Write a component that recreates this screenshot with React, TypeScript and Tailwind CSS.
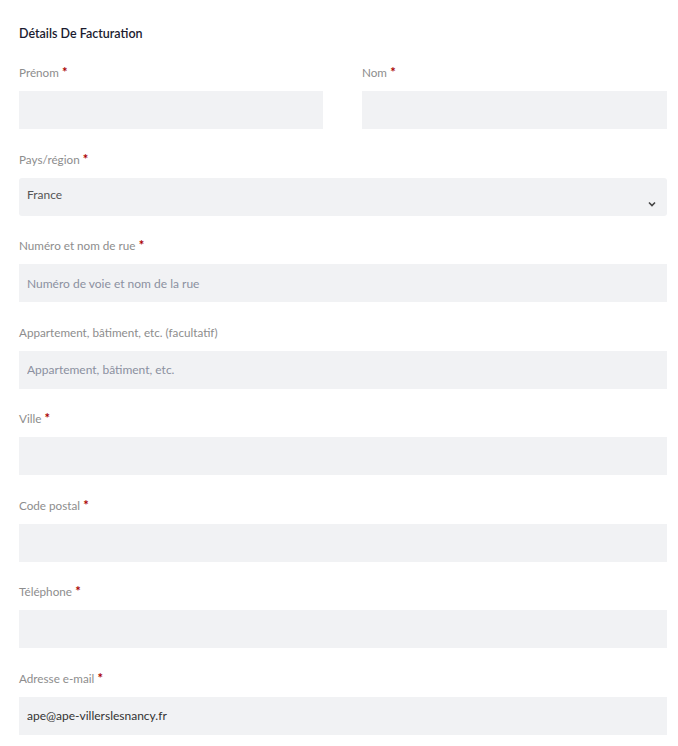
import React from 'react'

const Req = () => <span className="align-top text-[13px] font-bold leading-[14px] text-[#a00]"> *</span>

const Label = ({ children, required }: { children: React.ReactNode; required?: boolean }) => (
  <label className="mb-[12px] block h-[14px] text-[11.7px] leading-[14px] text-[#8d8d8d]">
    {children}
    {required && <Req />}
  </label>
)

const Input = ({ placeholder, value }: { placeholder?: string; value?: string }) => (
  <input
    type="text"
    defaultValue={value}
    placeholder={placeholder}
    className="block h-[38px] w-full bg-[#f1f2f4] px-[8px] text-[12px] text-[#333] outline-none placeholder:text-[#8b90a0]"
  />
)

const Field = ({
  label,
  required,
  placeholder,
  value,
}: {
  label: string
  required?: boolean
  placeholder?: string
  value?: string
}) => (
  <div className="mb-[22.5px]">
    <Label required={required}>{label}</Label>
    <Input placeholder={placeholder} value={value} />
  </div>
)

export default function App() {
  return (
    <div className="min-h-[746px] bg-white pl-[19px] pr-[11px] pt-[25px] font-['Lato',sans-serif]">
      <h3 className="mb-[22px] text-[12.5px] font-semibold leading-[18px] text-[#1b1b2f]">Détails De Facturation</h3>

      <div className="grid grid-cols-[304px_1fr] gap-x-[39px]">
        <Field label="Prénom" required />
        <Field label="Nom" required />
      </div>

      <div className="mb-[22.5px]">
        <Label required>Pays/région</Label>
        <div className="relative h-[38px] rounded-[3px] bg-[#f1f2f4] px-[8px]">
          <span className="block pt-[8px] text-[12px] leading-[18px] text-[#555]">France</span>
          <svg
            className="absolute right-[11px] top-[23px]"
            width="8"
            height="6"
            viewBox="0 0 8 6"
            fill="none"
            stroke="#444"
            strokeWidth="1.6"
          >
            <path d="M1 1.5l3 3 3-3" />
          </svg>
        </div>
      </div>

      <Field label="Numéro et nom de rue" required placeholder="Numéro de voie et nom de la rue" />
      <Field label="Appartement, bâtiment, etc. (facultatif)" placeholder="Appartement, bâtiment, etc." />
      <Field label="Ville" required />
      <Field label="Code postal" required />
      <Field label="Téléphone" required />
      <Field label="Adresse e-mail" required value="ape@ape-villerslesnancy.fr" />
    </div>
  )
}
